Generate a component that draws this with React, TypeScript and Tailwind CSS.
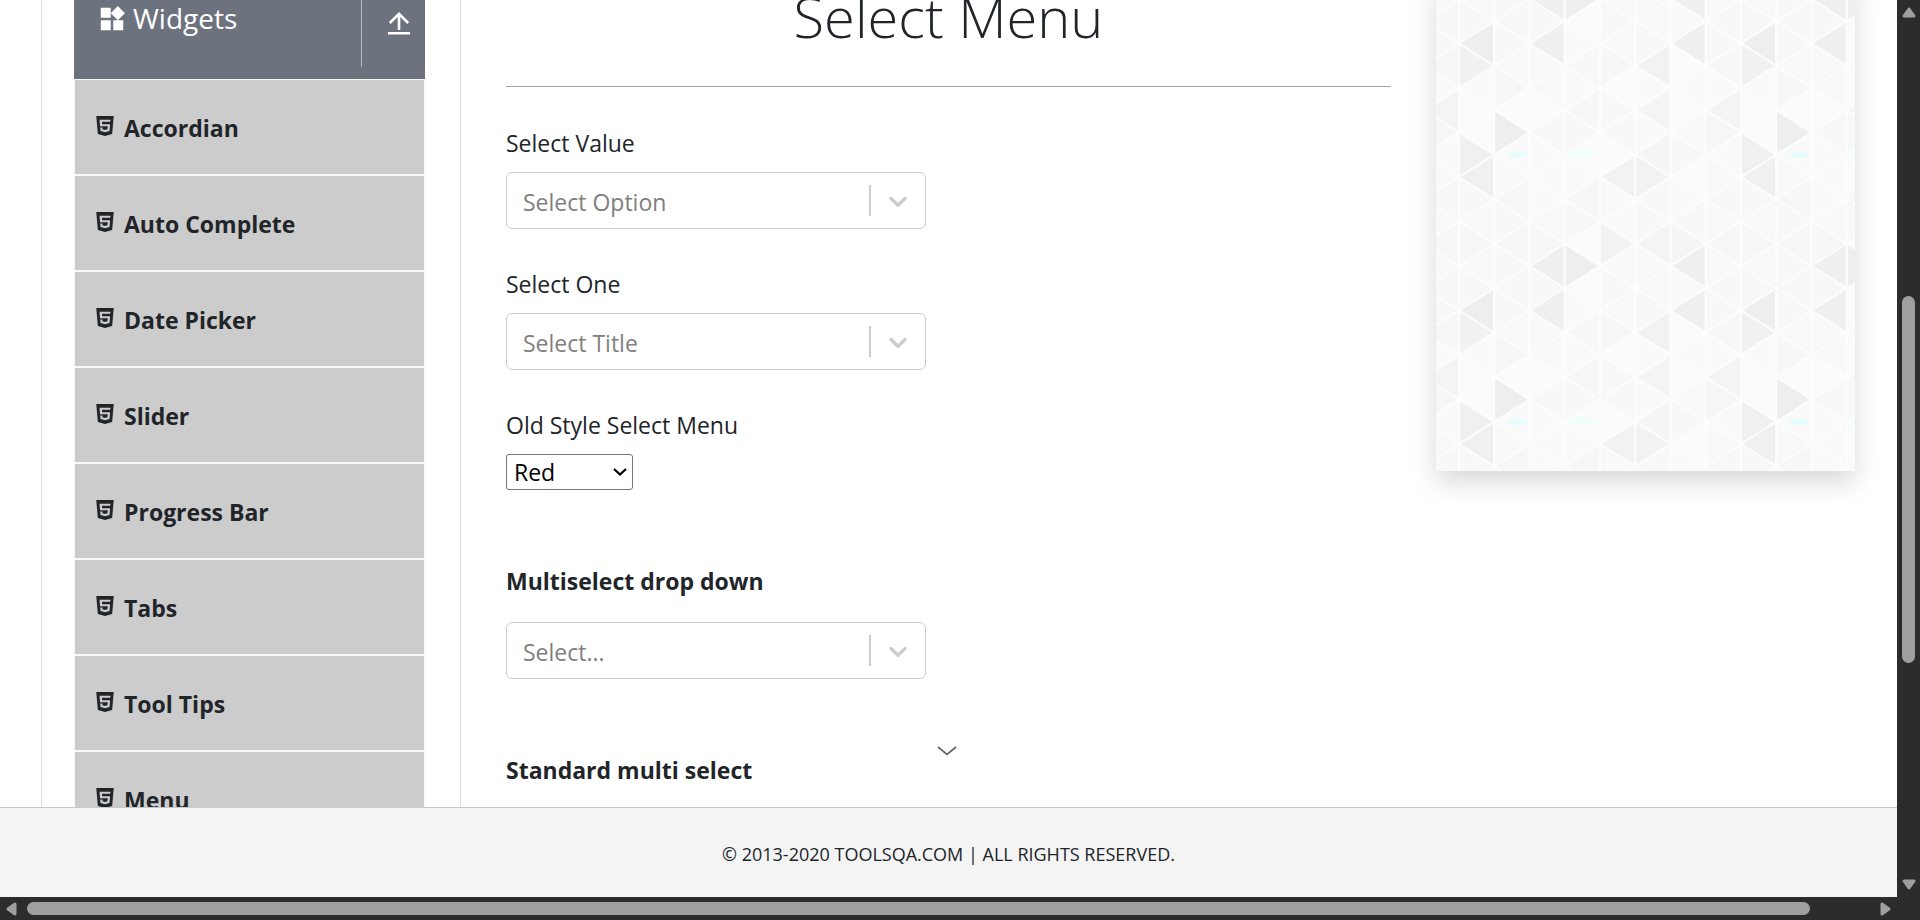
import React from "react";
import { MdWidgets } from "react-icons/md";
import { SiHtml5 } from "react-icons/si";

const menuItems = [
  "Accordian",
  "Auto Complete",
  "Date Picker",
  "Slider",
  "Progress Bar",
  "Tabs",
  "Tool Tips",
  "Menu",
];

/* Triangle tile: 8 strips by 12 half-rows, one shade per cell. */
const STEP_X = 35.25;
const STEP_Y = 22.25;
const shades: string[][] = [
  ["f8", "ee", "f1", "fa", "fb", "fb", "f0", "f0", "f8", "f9", "f7", "f9"],
  ["f8", "f8", "f9", "f7", "fb", "ee", "fa", "f9", "f7", "f8", "f7", "f8"],
  ["f8", "ef", "f9", "f9", "fb", "f8", "fa", "fa", "fa", "f9", "f7", "ef"],
  ["fb", "fa", "f8", "fa", "f7", "f8", "fb", "fa", "f7", "f8", "fb", "ee"],
  ["f8", "f9", "f7", "fb", "f8", "f8", "fb", "f2", "f9", "fa", "f2", "f9"],
  ["f9", "f8", "f2", "fa", "f4", "fa", "f5", "f2", "f8", "f8", "f4", "f9"],
  ["f9", "ef", "fb", "fa", "fb", "f9", "f8", "fb", "fa", "f8", "f5", "ef"],
  ["f8", "f8", "f7", "fa", "f4", "f6", "fa", "f9", "f8", "f9", "f7", "f9"],
];

function TriangleTile() {
  const cells: React.ReactElement[] = [];
  for (let s = 0; s < 8; s++) {
    for (let n = 0; n <= 12; n++) {
      const shade = shades[s][n % 12];
      const pointsLeft = (s + n) % 2 === 1;
      const tip = (pointsLeft ? s : s + 1) * STEP_X;
      const edge = (pointsLeft ? s + 1 : s) * STEP_X;
      const y = n * STEP_Y;
      cells.push(
        <polygon
          key={`${s}-${n}`}
          points={`${tip},${y} ${edge},${y - STEP_Y} ${edge},${y + STEP_Y}`}
          fill={`#${shade}${shade}${shade}`}
          stroke="#fdfdfd"
          strokeWidth="2"
        />,
      );
    }
  }
  return <>{cells}</>;
}

function AdPanel() {
  return (
    <aside
      aria-label="Advertisement"
      className="h-[495px] w-[419px] shrink-0 bg-[#fafafa] shadow-[0_12px_24px_rgba(0,0,0,0.15)]"
    >
      <svg className="block h-full w-full" aria-hidden="true">
        <defs>
          <pattern
            id="triangles"
            width="282"
            height="267"
            patternUnits="userSpaceOnUse"
            patternTransform="translate(23 45.3)"
          >
            <TriangleTile />
            <ellipse cx="58" cy="133.5" rx="10" ry="2.5" fill="#e2fffd" />
            <ellipse cx="124" cy="132.5" rx="14" ry="4" fill="#f1fffc" />
          </pattern>
        </defs>
        <rect width="100%" height="100%" fill="url(#triangles)" />
      </svg>
    </aside>
  );
}

function ComboBox({ id, placeholder }: { id: string; placeholder: string }) {
  return (
    <div className="relative h-[57px] w-[420px]">
      <select
        id={id}
        className="h-full w-full appearance-none rounded-md border border-[#cccccc] bg-white pt-1 pl-4 text-[23px] text-[#808080]"
      >
        <option>{placeholder}</option>
      </select>
      <div className="pointer-events-none absolute inset-y-0 right-0 flex items-center">
        <span className="h-[31px] w-0.5 bg-[#cccccc]" />
        <svg viewBox="0 0 20 20" className="mr-[13px] ml-3 h-[30px] w-[30px] fill-[#cccccc]" aria-hidden="true">
          <path d="M4.516 7.548c0.436-0.446 1.043-0.481 1.576 0l3.908 3.747 3.908-3.747c0.533-0.481 1.141-0.446 1.574 0 0.436 0.445 0.408 1.197 0 1.615-0.406 0.418-4.695 4.502-4.695 4.502-0.217 0.223-0.502 0.335-0.787 0.335s-0.57-0.112-0.789-0.335c0 0-4.287-4.084-4.695-4.502s-0.436-1.17 0-1.615z" />
        </svg>
      </div>
    </div>
  );
}

function Sidebar() {
  return (
    <nav aria-label="Widgets" className="w-[351px] shrink-0">
      <div className="flex h-[103px] bg-[#6c737e] text-white">
        <h2 className="flex flex-1 items-start pt-[22px] pl-[23px] text-[28px] leading-[40px]">
          <MdWidgets className="mt-[6px] mr-1.5 h-[30px] w-[30px]" aria-hidden="true" />
          Widgets
        </h2>
        <button
          type="button"
          aria-label="Collapse"
          className="mb-3 flex w-16 items-start border-l border-[#b5b9be] pt-[35px] pl-[25px]"
        >
          <svg viewBox="0 0 24 24" className="h-6 w-6" fill="none" stroke="currentColor" strokeWidth="2.600" aria-hidden="true">
            <path d="M12 19V3M2.800 12L12 2.800l9.200 9.200M1 22.300h22" />
          </svg>
        </button>
      </div>
      <ul className="flex flex-col gap-0.5 border border-[#f8f8f8] bg-[#f8f8f8]">
        {menuItems.map((item) => (
          <li key={item}>
            <a
              href="#"
              className="flex h-[94px] items-center bg-[#cccccc] pt-0.5 pl-5 text-[23px] font-bold text-[#212529]"
            >
              <SiHtml5 className="mr-[9px] mb-1 h-5 w-5" aria-hidden="true" />
              {item}
            </a>
          </li>
        ))}
      </ul>
    </nav>
  );
}

function SelectMenu() {
  return (
    <main className="min-w-0 flex-1">
      <h1 className="pt-1 text-center text-[56px] leading-[72px] font-light">Select Menu</h1>
      <hr className="mt-[34px] border-[#a6a6a6]" />
      <form className="flex flex-col items-start pt-[38px]">
        <label htmlFor="withOptGroup" className="mb-[11px] leading-9">Select Value</label>
        <ComboBox id="withOptGroup" placeholder="Select Option" />
        <label htmlFor="selectOne" className="mt-[37px] mb-[11px] leading-9">Select One</label>
        <ComboBox id="selectOne" placeholder="Select Title" />
        <label htmlFor="oldSelectMenu" className="mt-[37px] mb-[11px] leading-9">Old Style Select Menu</label>
        <div className="relative h-9 w-[127px]">
          <select
            id="oldSelectMenu"
            className="h-full w-full appearance-none rounded-[3px] border border-[#767676] bg-white pl-[7px] text-[23px] leading-8 text-black"
          >
            <option>Red</option>
          </select>
          <svg viewBox="0 0 14 8" className="pointer-events-none absolute top-3.5 right-1.5 h-2 w-3.5" fill="none" stroke="#000000" strokeWidth="2.200" aria-hidden="true">
            <path d="M1 1l6 5.500L13 1" />
          </svg>
        </div>
        <label htmlFor="multiSelect" className="mt-[73px] mb-[23px] leading-9 font-bold">
          Multiselect drop down
        </label>
        <ComboBox id="multiSelect" placeholder="Select..." />
        <p className="mt-[73px] leading-9 font-bold">Standard multi select</p>
      </form>
    </main>
  );
}

function VerticalScrollbar() {
  return (
    <div className="flex w-[23px] shrink-0 flex-col items-center bg-[#2c2c2c] py-[7px]">
      <svg viewBox="0 0 14 11" className="h-[11px] w-3.5" fill="#9f9f9f" stroke="#9f9f9f" strokeWidth="3" strokeLinejoin="round" aria-hidden="true">
        <path d="M7 2l5 7H2z" />
      </svg>
      <div className="flex w-[13px] flex-1 flex-col">
        <div className="flex-[278]" />
        <div className="flex-[367] rounded-full bg-[#9f9f9f]" />
        <div className="flex-[216]" />
      </div>
      <svg viewBox="0 0 14 11" className="h-[11px] w-3.5" fill="#9f9f9f" stroke="#9f9f9f" strokeWidth="3" strokeLinejoin="round" aria-hidden="true">
        <path d="M7 9l5-7H2z" />
      </svg>
    </div>
  );
}

function HorizontalScrollbar() {
  return (
    <div className="flex h-[23px] shrink-0 items-center bg-[#2c2c2c] pr-[29px] pl-1.5">
      <svg viewBox="0 0 11 14" className="h-3.5 w-[11px]" fill="#9f9f9f" stroke="#9f9f9f" strokeWidth="3" strokeLinejoin="round" aria-hidden="true">
        <path d="M2 7l7-5v10z" />
      </svg>
      <div className="ml-2.5 flex h-[13px] flex-1">
        <div className="flex-[1783] rounded-full bg-[#9f9f9f]" />
        <div className="flex-[70]" />
      </div>
      <svg viewBox="0 0 11 14" className="h-3.5 w-[11px]" fill="#9f9f9f" stroke="#9f9f9f" strokeWidth="3" strokeLinejoin="round" aria-hidden="true">
        <path d="M9 7L2 2v10z" />
      </svg>
    </div>
  );
}

export default function App() {
  return (
    <div className="flex h-screen flex-col overflow-hidden bg-white font-['Open_Sans','Noto_Sans',sans-serif] text-[23px] text-[#212529]">
      <div className="flex min-h-0 flex-1">
        <div className="flex min-w-0 flex-1 flex-col">
          <div className="relative min-h-0 flex-1 overflow-hidden pl-[41px]">
            <div className="-mt-6 flex border-l border-[#dddddd] pr-[42px] pl-8">
              <Sidebar />
              <div className="ml-[35px] flex min-w-0 flex-1 items-start gap-[45px] border-l border-[#dddddd] pl-[45px]">
                <SelectMenu />
                <AdPanel />
              </div>
            </div>
            <button
              type="button"
              aria-label="Scroll down"
              className="absolute bottom-[51px] left-1/2 -translate-x-3"
            >
              <svg viewBox="0 0 20 10" className="h-2.5 w-5" fill="none" stroke="#666666" strokeWidth="1.700" aria-hidden="true">
                <path d="M1 1l9 7.500L19 1" />
              </svg>
            </button>
          </div>
          <footer className="flex h-[90px] shrink-0 items-center justify-center border-t border-[#c8c8c8] bg-[#f4f4f4] pt-1 text-[18px]">
            © 2013-2020 TOOLSQA.COM | ALL RIGHTS RESERVED.
          </footer>
        </div>
        <VerticalScrollbar />
      </div>
      <HorizontalScrollbar />
    </div>
  );
}
